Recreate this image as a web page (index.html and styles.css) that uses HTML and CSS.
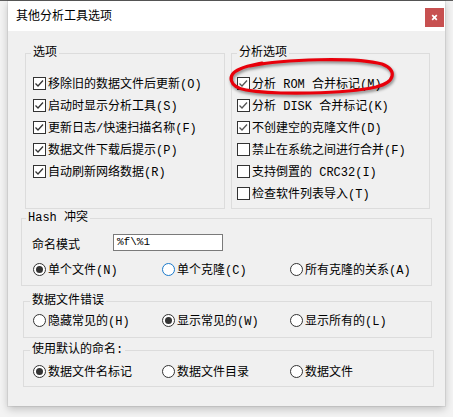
FILE: index.html
```html
<!DOCTYPE html>
<html lang="zh-CN">
<head>
<meta charset="utf-8">
<title>其他分析工具选项</title>
<link rel="stylesheet" href="styles.css">
</head>
<body>
<div class="topline"></div>
<div class="window">
  <div class="titlebar">
    <span class="title">其他分析工具选项</span>
    <span class="close"><svg width="19" height="19" viewBox="0 0 19 19"><path d="M7.2 7.2 L11.8 11.8 M11.8 7.2 L7.2 11.8" stroke="#fff" stroke-width="1.7" fill="none"/></svg></span>
  </div>
  <div class="content">
    <div class="toprow">
      <fieldset class="group g-opts">
        <legend>选项</legend>
        <label class="chk"><span class="box"><svg width="11" height="11" viewBox="0 0 11 11"><path d="M1.5 5.5 L4 8 L9 2.5" fill="none" stroke="#333" stroke-width="1.3"/></svg></span>移除旧的数据文件后更新(O)</label>
        <label class="chk"><span class="box"><svg width="11" height="11" viewBox="0 0 11 11"><path d="M1.5 5.5 L4 8 L9 2.5" fill="none" stroke="#333" stroke-width="1.3"/></svg></span>启动时显示分析工具(S)</label>
        <label class="chk"><span class="box"><svg width="11" height="11" viewBox="0 0 11 11"><path d="M1.5 5.5 L4 8 L9 2.5" fill="none" stroke="#333" stroke-width="1.3"/></svg></span>更新日志/快速扫描名称(F)</label>
        <label class="chk"><span class="box"><svg width="11" height="11" viewBox="0 0 11 11"><path d="M1.5 5.5 L4 8 L9 2.5" fill="none" stroke="#333" stroke-width="1.3"/></svg></span>数据文件下载后提示(P)</label>
        <label class="chk"><span class="box"><svg width="11" height="11" viewBox="0 0 11 11"><path d="M1.5 5.5 L4 8 L9 2.5" fill="none" stroke="#333" stroke-width="1.3"/></svg></span>自动刷新网络数据(R)</label>
      </fieldset>
      <fieldset class="group g-anal">
        <legend>分析选项</legend>
        <label class="chk"><span class="box"><svg width="11" height="11" viewBox="0 0 11 11"><path d="M1.5 5.5 L4 8 L9 2.5" fill="none" stroke="#555" stroke-width="1.3"/></svg></span>分析 ROM 合并标记(M)</label>
        <label class="chk"><span class="box"><svg width="11" height="11" viewBox="0 0 11 11"><path d="M1.5 5.5 L4 8 L9 2.5" fill="none" stroke="#555" stroke-width="1.3"/></svg></span>分析 DISK 合并标记(K)</label>
        <label class="chk"><span class="box"><svg width="11" height="11" viewBox="0 0 11 11"><path d="M1.5 5.5 L4 8 L9 2.5" fill="none" stroke="#555" stroke-width="1.3"/></svg></span>不创建空的克隆文件(D)</label>
        <label class="chk"><span class="box"></span>禁止在系统之间进行合并(F)</label>
        <label class="chk"><span class="box"></span>支持倒置的 CRC32(I)</label>
        <label class="chk"><span class="box"></span>检查软件列表导入(T)</label>
      </fieldset>
    </div>
    <fieldset class="group g-hash">
      <legend>Hash 冲突</legend>
      <div class="row-name"><span class="lbl">命名模式</span><span class="inp">%f\%1</span></div>
      <div class="radios">
        <label class="rad"><span class="radio on"></span>单个文件(N)</label>
        <label class="rad"><span class="radio hover"></span>单个克隆(C)</label>
        <label class="rad"><span class="radio"></span>所有克隆的关系(A)</label>
      </div>
    </fieldset>
    <fieldset class="group g-err">
      <legend>数据文件错误</legend>
      <div class="radios">
        <label class="rad"><span class="radio"></span>隐藏常见的(H)</label>
        <label class="rad"><span class="radio on"></span>显示常见的(W)</label>
        <label class="rad"><span class="radio"></span>显示所有的(L)</label>
      </div>
    </fieldset>
    <fieldset class="group g-name">
      <legend>使用默认的命名:</legend>
      <div class="radios">
        <label class="rad"><span class="radio on"></span>数据文件名标记</label>
        <label class="rad"><span class="radio"></span>数据文件目录</label>
        <label class="rad"><span class="radio"></span>数据文件</label>
      </div>
    </fieldset>
  </div>
</div>
<svg class="annot" width="453" height="417" viewBox="0 0 453 417">
  <path d="M250 66 C285 59 355 57 382 64 C397 70 396 82 376 87 C345 94 275 95 246 90 C229 87 226 75 240 69 C246 66 252 65 262 63" fill="none" stroke="#e8000b" stroke-width="3.2" stroke-linecap="round"/>
</svg>
</body>
</html>
```
FILE: styles.css
```css
* { box-sizing: border-box; }
html, body { margin: 0; }
body {
  position: relative;
  width: 453px;
  height: 417px;
  overflow: hidden;
  background: #f3f3f3;
  font-family: "Liberation Mono", "Noto Sans CJK SC", monospace;
  font-size: 12px;
  color: #000;
}
.topline { height: 1px; background: #5f5f5f; }
.window {
  margin-left: 8px;
  width: 437px;
  height: 405px;
  background: #f0f0f0;
  box-shadow: 0 0 0 1px rgba(0,0,0,0.06), 0 3px 8px rgba(0,0,0,0.22);
  display: flex;
  flex-direction: column;
}
.titlebar {
  height: 30px;
  background: #fff;
  display: flex;
  align-items: flex-start;
  padding-left: 8px;
}
.title {
  font-family: "Noto Sans CJK SC", sans-serif;
  font-size: 12px;
  line-height: 28px;
}
.close {
  margin-left: auto;
  margin-top: 7px;
  margin-right: 1px;
  width: 19px;
  height: 19px;
  background: #c75050;
  display: flex;
}
.content { flex: 1; padding-top: 15px; }

.group {
  border: 1px solid #dcdcdc;
  min-width: 0;
}
legend {
  padding: 0 2px;
  height: 14px;
  line-height: 14px;
}
.toprow { display: flex; gap: 6px; margin-left: 17px; }
.g-opts { margin: 0; width: 200px; padding: 12px 0 4px 7px; }
.g-opts legend { margin-left: -2px; }
.g-anal { margin: 0; width: 199px; padding: 12px 0 4px 5px; }

.chk {
  display: flex;
  align-items: center;
  gap: 2px;
  height: 22px;
  white-space: nowrap;
}
.box {
  flex: none;
  width: 13px;
  height: 13px;
  border: 1px solid #333;
  background: #fff;
  display: flex;
}

.g-hash { margin: 2px 0 0 13px; width: 411px; padding: 8px 0 5px 11px; }
.g-hash legend { margin-left: -7px; }
.row-name { display: flex; align-items: center; height: 18px; }
.lbl { width: 81px; margin-left: -1px; padding-top: 3px; }
.inp {
  width: 110px;
  height: 17px;
  border: 1px solid #7a7a7a;
  background: #fff;
  padding-left: 3px;
  font-size: 11px;
  line-height: 15px;
}
.radios {
  display: grid;
  grid-template-columns: 129px 128px auto;
  align-items: center;
  height: 22px;
  white-space: nowrap;
}
.g-hash .radios { margin-top: 7px; }
.rad { display: flex; align-items: center; gap: 2px; }
.radio {
  flex: none;
  width: 13px;
  height: 13px;
  border: 1px solid #333;
  border-radius: 50%;
  background: #fff;
  display: flex;
  align-items: center;
  justify-content: center;
}
.radio.on::after {
  content: "";
  width: 7px;
  height: 7px;
  border-radius: 50%;
  background: #333;
}
.radio.hover { border-color: #1979ca; }

.g-err { margin: 8px 0 0 15px; width: 409px; padding: 1px 0 6px 9px; }
.g-err legend, .g-name legend { margin-left: -3px; }
.g-name { margin: 5px 0 0 15px; width: 411px; padding: 3px 0 4px 9px; }

.annot {
  position: absolute;
  left: 0;
  top: 0;
  pointer-events: none;
  filter: drop-shadow(1px 2px 1.5px rgba(0,0,0,0.45));
}
```
